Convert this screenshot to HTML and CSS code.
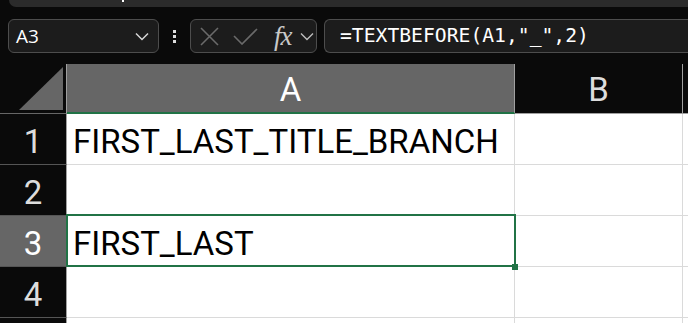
FILE: index.html
```html
<!DOCTYPE html>
<html lang="en">
<head>
    <meta charset="UTF-8">
    <meta name="viewport" content="width=device-width, initial-scale=1.0">
    <title>TEXTBEFORE - Sheet</title>
    <link rel="stylesheet" href="styles.css">
</head>
<body>

    <div class="titlebar"><span class="tick"></span></div>

    <div class="toolbar">
        <div class="namebox">
            <span class="ref">A3</span>
            <svg class="chev" width="14" height="9" viewBox="0 0 14 9"><path d="M1 1.5 L7 7.5 L13 1.5" fill="none" stroke="#d6d6d6" stroke-width="1.5"/></svg>
        </div>
        <div class="dots"><i></i><i></i><i></i></div>
        <div class="fxbox">
            <svg width="19" height="19" viewBox="0 0 19 19"><path d="M1 1 L18 18 M18 1 L1 18" stroke="#6a6a6a" stroke-width="1.6"/></svg>
            <svg width="25" height="17" viewBox="0 0 25 17"><path d="M1 8 L9 16 L24 1" fill="none" stroke="#6a6a6a" stroke-width="1.6"/></svg>
            <span class="fx">fx</span>
            <svg class="fxchev" width="14" height="9" viewBox="0 0 14 9"><path d="M1 1.5 L7 7.5 L13 1.5" fill="none" stroke="#bdbdbd" stroke-width="1.4"/></svg>
        </div>
        <div class="formula">=TEXTBEFORE(A1,"_",2)</div>
    </div>

    <div class="sheet">
        <div class="corner"><svg width="44" height="43" viewBox="0 0 44 43"><path d="M0 43 L44 43 L44 0 Z" fill="#666"/></svg></div>
        <div class="colhead active">A</div>
        <div class="colhead">B</div>
        <div class="colhead last"></div>

        <div class="rowhead">1</div>
        <div class="cell">FIRST_LAST_TITLE_BRANCH</div>
        <div class="cell"></div>
        <div class="cell"></div>

        <div class="rowhead">2</div>
        <div class="cell"></div>
        <div class="cell"></div>
        <div class="cell"></div>

        <div class="rowhead active">3</div>
        <div class="cell selected">FIRST_LAST</div>
        <div class="cell"></div>
        <div class="cell"></div>

        <div class="rowhead">4</div>
        <div class="cell"></div>
        <div class="cell"></div>
        <div class="cell"></div>

        <div class="rowhead"></div>
        <div class="cell"></div>
        <div class="cell"></div>
        <div class="cell"></div>
    </div>

</body>
</html>
```

FILE: styles.css
```css
body {
    margin: 0;
    background-color: #0a0a0a;
    font-family: 'Roboto', 'Liberation Sans', sans-serif;
    overflow: hidden;
    width: 688px;
    height: 323px;
}
.titlebar {
    height: 7px;
    margin-left: 9px;
    background-color: #2b2b2b;
    border-bottom-left-radius: 8px;
    position: relative;
}
.tick {
    position: absolute;
    left: 113px;
    top: 0;
    width: 2px;
    height: 2px;
    background-color: #fff;
}
.toolbar {
    display: flex;
    align-items: center;
    margin-top: 12px;
    height: 34px;
}
.namebox {
    margin-left: 8px;
    width: 151px;
    height: 34px;
    box-sizing: border-box;
    border: 1px solid #4d4d4d;
    border-radius: 6px;
    background-color: #1c1c1c;
    display: flex;
    align-items: center;
    justify-content: space-between;
    padding: 0 9px 0 7px;
}
.ref {
    color: #fff;
    font-family: 'Open Sans', sans-serif;
    font-size: 19px;
}
.dots {
    width: 31px;
    display: flex;
    flex-direction: column;
    align-items: center;
    gap: 2px;
}
.dots i {
    display: block;
    width: 3px;
    height: 3px;
    background-color: #ddd;
}
.fxbox {
    width: 127px;
    height: 34px;
    box-sizing: border-box;
    border: 1px solid #4d4d4d;
    border-radius: 6px;
    background-color: #1c1c1c;
    display: flex;
    align-items: center;
    padding: 0 0 0 9px;
    gap: 14px;
}
.fx {
    margin-left: 2px;
    color: #c8c8c8;
    font-family: 'Liberation Serif', serif;
    font-style: italic;
    font-size: 27px;
    line-height: 30px;
    letter-spacing: -1px;
}
.fxchev {
    margin-left: -6px;
}
.formula {
    margin-left: 7px;
    flex: 1;
    height: 34px;
    box-sizing: border-box;
    border: 1px solid #4d4d4d;
    border-right: none;
    border-radius: 6px 0 0 6px;
    background-color: #1c1c1c;
    color: #fff;
    font-family: 'DejaVu Sans Mono', monospace;
    font-size: 19.7px;
    line-height: 32px;
    padding-left: 15px;
    white-space: nowrap;
}
.sheet {
    margin-top: 11px;
    display: grid;
    grid-template-columns: 67px 448px 168px 1fr;
    grid-template-rows: 50px repeat(4, 51px) 5px;
    overflow: hidden;
}
.corner {
    border-right: 1px solid #a0a0a0;
    border-bottom: 1px solid #666;
    display: flex;
    align-items: flex-end;
    justify-content: flex-end;
    padding: 0 3px 3px 0;
    box-sizing: border-box;
}
.colhead {
    color: #ddd;
    font-size: 33px;
    line-height: 46px;
    padding-top: 3px;
    text-align: center;
    border-right: 1px solid #a0a0a0;
    border-bottom: 1px solid #a0a0a0;
    box-sizing: border-box;
}
.colhead.active {
    background-color: #666;
    color: #fff;
    border-bottom: 2px solid #217346;
}
.colhead.last {
    border-right: none;
}
.rowhead {
    color: #ddd;
    font-size: 33px;
    line-height: 44px;
    padding-top: 6px;
    text-align: center;
    border-right: 1px solid #a0a0a0;
    border-bottom: 1px solid #555;
    box-sizing: border-box;
}
.rowhead.active {
    background-color: #666;
    color: #fff;
}
.cell {
    background-color: #fff;
    border-right: 1px solid #dadada;
    border-bottom: 1px solid #dadada;
    box-sizing: border-box;
    color: #000;
    font-size: 33px;
    line-height: 44px;
    padding: 6px 0 0 6px;
    white-space: nowrap;
}
.cell.selected {
    position: relative;
}
.cell.selected::after {
    content: "";
    position: absolute;
    left: -1px;
    top: -2px;
    right: -2px;
    bottom: -1px;
    border: 2px solid #217346;
}
.cell.selected::before {
    content: "";
    position: absolute;
    right: -4px;
    bottom: -4px;
    width: 6px;
    height: 6px;
    background-color: #217346;
    z-index: 1;
}
```
